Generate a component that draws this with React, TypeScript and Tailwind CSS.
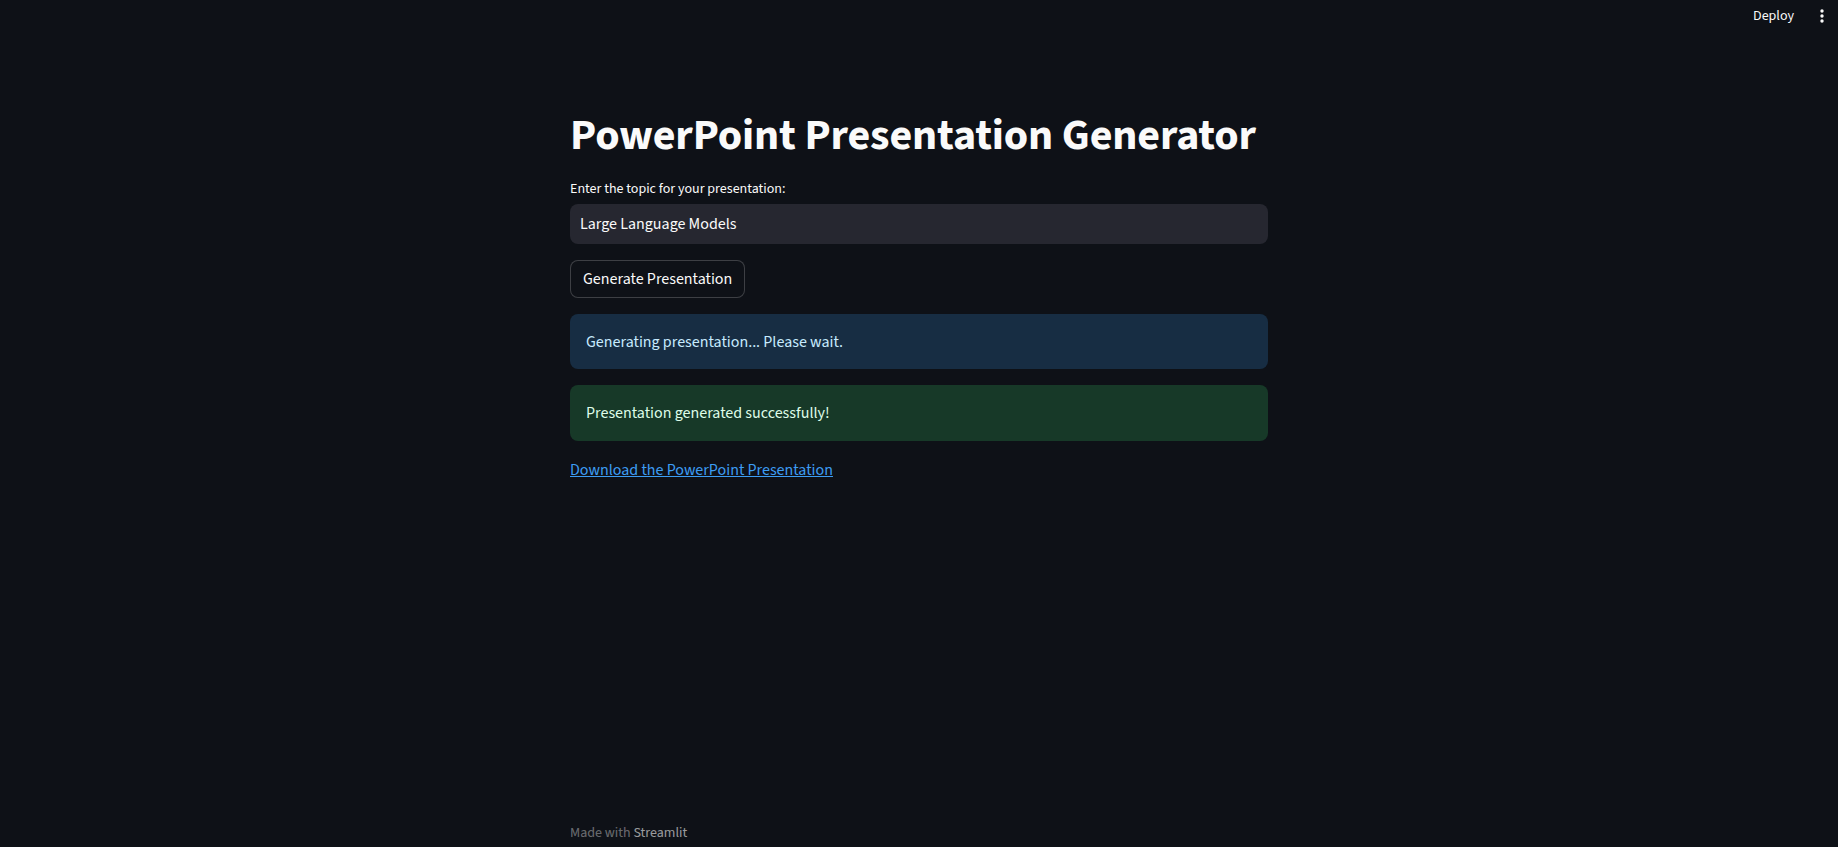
import React from "react";

export default function App() {
  const font = { fontFamily: "'Source Sans Pro', 'Source Sans 3', Lato, 'Liberation Sans', sans-serif" };
  return (
    <div className="min-h-screen w-full bg-[#0e1117] text-[#fafafa] flex flex-col" style={font}>
      <header className="h-[32px] flex items-center justify-end pr-[14px]">
        <span className="text-[14px] text-[#fafafa] mr-[26px] leading-none">Deploy</span>
        <svg width="4" height="14" viewBox="0 0 4 14" className="text-[#fafafa]">
          <circle cx="2" cy="2" r="1.7" fill="currentColor" />
          <circle cx="2" cy="7" r="1.7" fill="currentColor" />
          <circle cx="2" cy="12" r="1.7" fill="currentColor" />
        </svg>
      </header>
      <main className="w-[698px] mx-auto flex flex-col flex-1">
        <h1 className="mt-[77px] text-[44px] font-bold leading-[53px] tracking-[-0.15px] text-[#fafafa]">
          PowerPoint Presentation Generator
        </h1>
        <label className="mt-[17px] text-[14px] leading-[20px] text-[#fafafa]">
          Enter the topic for your presentation:
        </label>
        <div className="mt-[5px] h-[40px] rounded-[8px] bg-[#262730] flex items-center px-[10px] text-[16px] text-[#fafafa]">
          Large Language Models
        </div>
        <div className="mt-[16px]">
          <button className="h-[38px] px-[12px] rounded-[8px] border border-[rgba(250,250,250,0.2)] bg-[#0e1117] text-[16px] text-[#fafafa]">
            Generate Presentation
          </button>
        </div>
        <div className="mt-[16px] h-[55px] rounded-[8px] bg-[#172d43] flex items-center px-[16px] text-[16px] text-[#c7ebff]">
          Generating presentation... Please wait.
        </div>
        <div className="mt-[16px] h-[56px] rounded-[8px] bg-[#173928] flex items-center px-[16px] text-[16px] text-[#dffde9]">
          Presentation generated successfully!
        </div>
        <div className="mt-[17px] text-[16px] leading-[24px]">
          <a href="#" className="text-[#3d9df3] underline">Download the PowerPoint Presentation</a>
        </div>
        <div className="flex-1" />
        <footer className="pb-[4px] text-[14px] leading-[20px]">
          <span className="text-[rgba(250,250,250,0.4)]">Made with </span>
          <span className="text-[rgba(250,250,250,0.6)]">Streamlit</span>
        </footer>
      </main>
    </div>
  );
}
